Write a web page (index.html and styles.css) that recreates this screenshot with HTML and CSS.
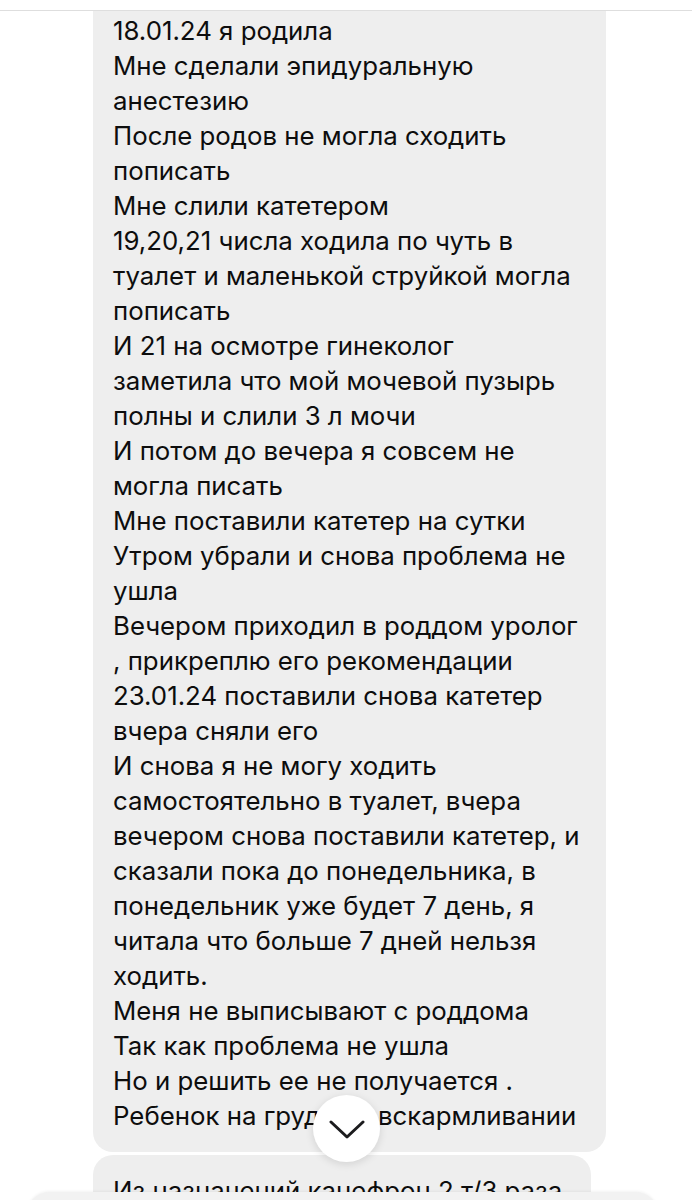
FILE: index.html
```html
<!DOCTYPE html>
<html lang="ru">
<head>
<meta charset="utf-8">
<link rel="stylesheet" href="styles.css">
</head>
<body>
<div class="screen">
  <div class="topbar"></div>
  <div class="thread">
    <div class="bubble bubble-first">
      <div class="ln">18.01.24 я родила</div>
      <div class="ln">Мне сделали эпидуральную</div>
      <div class="ln">анестезию</div>
      <div class="ln">После родов не могла сходить</div>
      <div class="ln">пописать</div>
      <div class="ln">Мне слили катетером</div>
      <div class="ln">19,20,21 числа ходила по чуть в</div>
      <div class="ln">туалет и маленькой струйкой могла</div>
      <div class="ln">пописать</div>
      <div class="ln">И 21 на осмотре гинеколог</div>
      <div class="ln">заметила что мой мочевой пузырь</div>
      <div class="ln">полны и слили 3 л мочи</div>
      <div class="ln">И потом до вечера я совсем не</div>
      <div class="ln">могла писать</div>
      <div class="ln">Мне поставили катетер на сутки</div>
      <div class="ln">Утром убрали и снова проблема не</div>
      <div class="ln">ушла</div>
      <div class="ln">Вечером приходил в роддом уролог</div>
      <div class="ln">, прикреплю его рекомендации</div>
      <div class="ln">23.01.24 поставили снова катетер</div>
      <div class="ln">вчера сняли его</div>
      <div class="ln">И снова я не могу ходить</div>
      <div class="ln">самостоятельно в туалет, вчера</div>
      <div class="ln">вечером снова поставили катетер, и</div>
      <div class="ln">сказали пока до понедельника, в</div>
      <div class="ln">понедельник уже будет 7 день, я</div>
      <div class="ln">читала что больше 7 дней нельзя</div>
      <div class="ln">ходить.</div>
      <div class="ln">Меня не выписывают с роддома</div>
      <div class="ln">Так как проблема не ушла</div>
      <div class="ln">Но и решить ее не получается .</div>
      <div class="ln">Ребенок на грудном вскармливании</div>
    </div>
    <div class="bubble bubble-second">
      <div class="ln">Из назначений канефрон 2 т/3 раза</div>
      <div class="ln">в день</div>
    </div>
  </div>
  <button class="scroll-down" aria-label="Прокрутить вниз">
    <svg width="36" height="20" viewBox="0 0 36 20"><path d="M2 2 L18 17 L34 2" fill="none" stroke="#1c1c1e" stroke-width="3" stroke-linecap="round" stroke-linejoin="round"/></svg>
  </button>
  <div class="composer"></div>
</div>
</body>
</html>
```

FILE: styles.css
```css
* { box-sizing: border-box; }
html, body {
  margin: 0;
  padding: 0;
  background: #ffffff;
}
.screen {
  position: relative;
  width: 692px;
  height: 1200px;
  overflow: hidden;
  font-family: Inter, "Noto Sans", sans-serif;
  color: #0d0d0d;
}
.topbar {
  height: 11px;
  border-bottom: 1px solid #dedede;
}
.thread {
  display: flex;
  flex-direction: column;
  gap: 3px;
  padding-left: 93px;
}
.bubble {
  background: #eeeeee;
  font-size: 25.8px;
  line-height: 35px;
  padding: 2px 20px 19px 20px;
  border-radius: 20px;
}
.bubble-first {
  width: 513px;
  border-top-left-radius: 0;
  border-top-right-radius: 0;
}
.bubble-second {
  width: 498px;
  padding-top: 18px;
}
.ln { white-space: nowrap; }
.scroll-down {
  position: absolute;
  left: 313px;
  top: 1095px;
  width: 67px;
  height: 67px;
  border-radius: 50%;
  border: none;
  background: #ffffff;
  box-shadow: 0 2px 8px rgba(0,0,0,0.12);
  display: flex;
  align-items: center;
  justify-content: center;
  padding: 0;
  padding-top: 2px;
}
.composer {
  position: absolute;
  left: 27px;
  top: 1192px;
  width: 631px;
  height: 40px;
  background: #f2f2f2;
  border-radius: 22px 22px 0 0;
  box-shadow: 0 -1px 3px rgba(0,0,0,0.05);
}
```
